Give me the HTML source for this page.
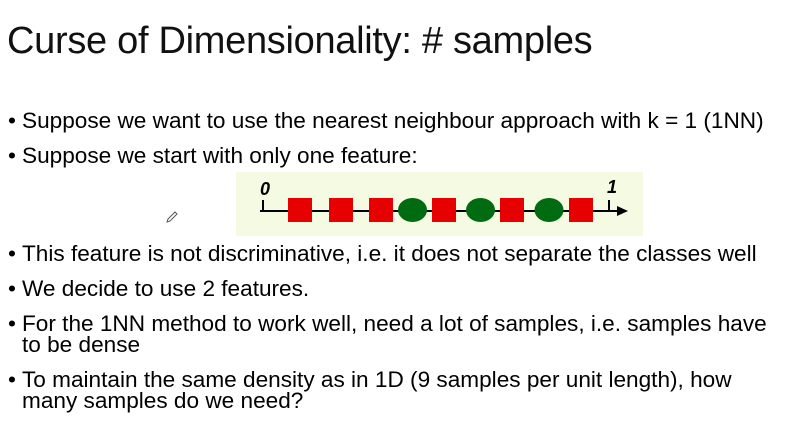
<!DOCTYPE html>
<html><head><style>
body{margin:0;width:808px;height:430px;background:#fff;position:relative;overflow:hidden;font-family:"Liberation Sans",sans-serif;color:#000}
.t{position:absolute;left:7px;top:20px;font-size:38px;white-space:nowrap;letter-spacing:-0.3px;color:#111}
.b{position:absolute;left:8px;font-size:22.6px;white-space:nowrap;line-height:21px}
.b span.d{position:absolute;left:0}
.b div{margin-left:14px}
</style></head><body>
<div class="t">Curse of Dimensionality: # samples</div>
<div class="b" style="top:110px"><span class="d">•</span><div>Suppose we want to use the nearest neighbour approach with k = 1 (1NN)</div></div>
<div class="b" style="top:145px"><span class="d">•</span><div>Suppose we start with only one feature:</div></div>
<div class="b" style="top:243px"><span class="d">•</span><div>This feature is not discriminative, i.e. it does not separate the classes well</div></div>
<div class="b" style="top:278px"><span class="d">•</span><div>We decide to use 2 features.</div></div>
<div class="b" style="top:313px"><span class="d">•</span><div>For the 1NN method to work well, need a lot of samples, i.e. samples have<br>to be dense</div></div>
<div class="b" style="top:369px"><span class="d">•</span><div>To maintain the same density as in 1D (9 samples per unit length), how<br>many samples do we need?</div></div>
<svg style="position:absolute;left:0;top:0" width="808" height="430">
<rect x="236" y="172" width="407" height="64" fill="#f5fbe2"/>
<line x1="260" y1="211" x2="620" y2="211" stroke="#000" stroke-width="2"/>
<polygon points="617,206 628,211 617,216" fill="#000"/>
<line x1="263" y1="200" x2="263" y2="211" stroke="#000" stroke-width="2"/>
<line x1="609" y1="200" x2="609" y2="211" stroke="#000" stroke-width="2"/>
<text x="260" y="195" font-size="18" font-weight="bold" font-style="italic" font-family="Liberation Sans">0</text>
<text x="607" y="193" font-size="18" font-weight="bold" font-style="italic" font-family="Liberation Sans">1</text>
<g fill="#e60000">
<rect x="288" y="198" width="24" height="24"/><rect x="329" y="198" width="24" height="24"/><rect x="369" y="198" width="24" height="24"/><rect x="432" y="198" width="24" height="24"/><rect x="500" y="198" width="24" height="24"/><rect x="569" y="198" width="24" height="24"/>
</g>
<g fill="#006b10">
<ellipse cx="412.5" cy="210" rx="14.5" ry="12"/><ellipse cx="480.5" cy="210" rx="14.5" ry="12"/><ellipse cx="549" cy="210" rx="14.5" ry="12"/>
</g>
<path d="M168 219 l7-7 2 2-7 7-3 1z" fill="none" stroke="#555" stroke-width="1"/>
</svg>
</body></html>
